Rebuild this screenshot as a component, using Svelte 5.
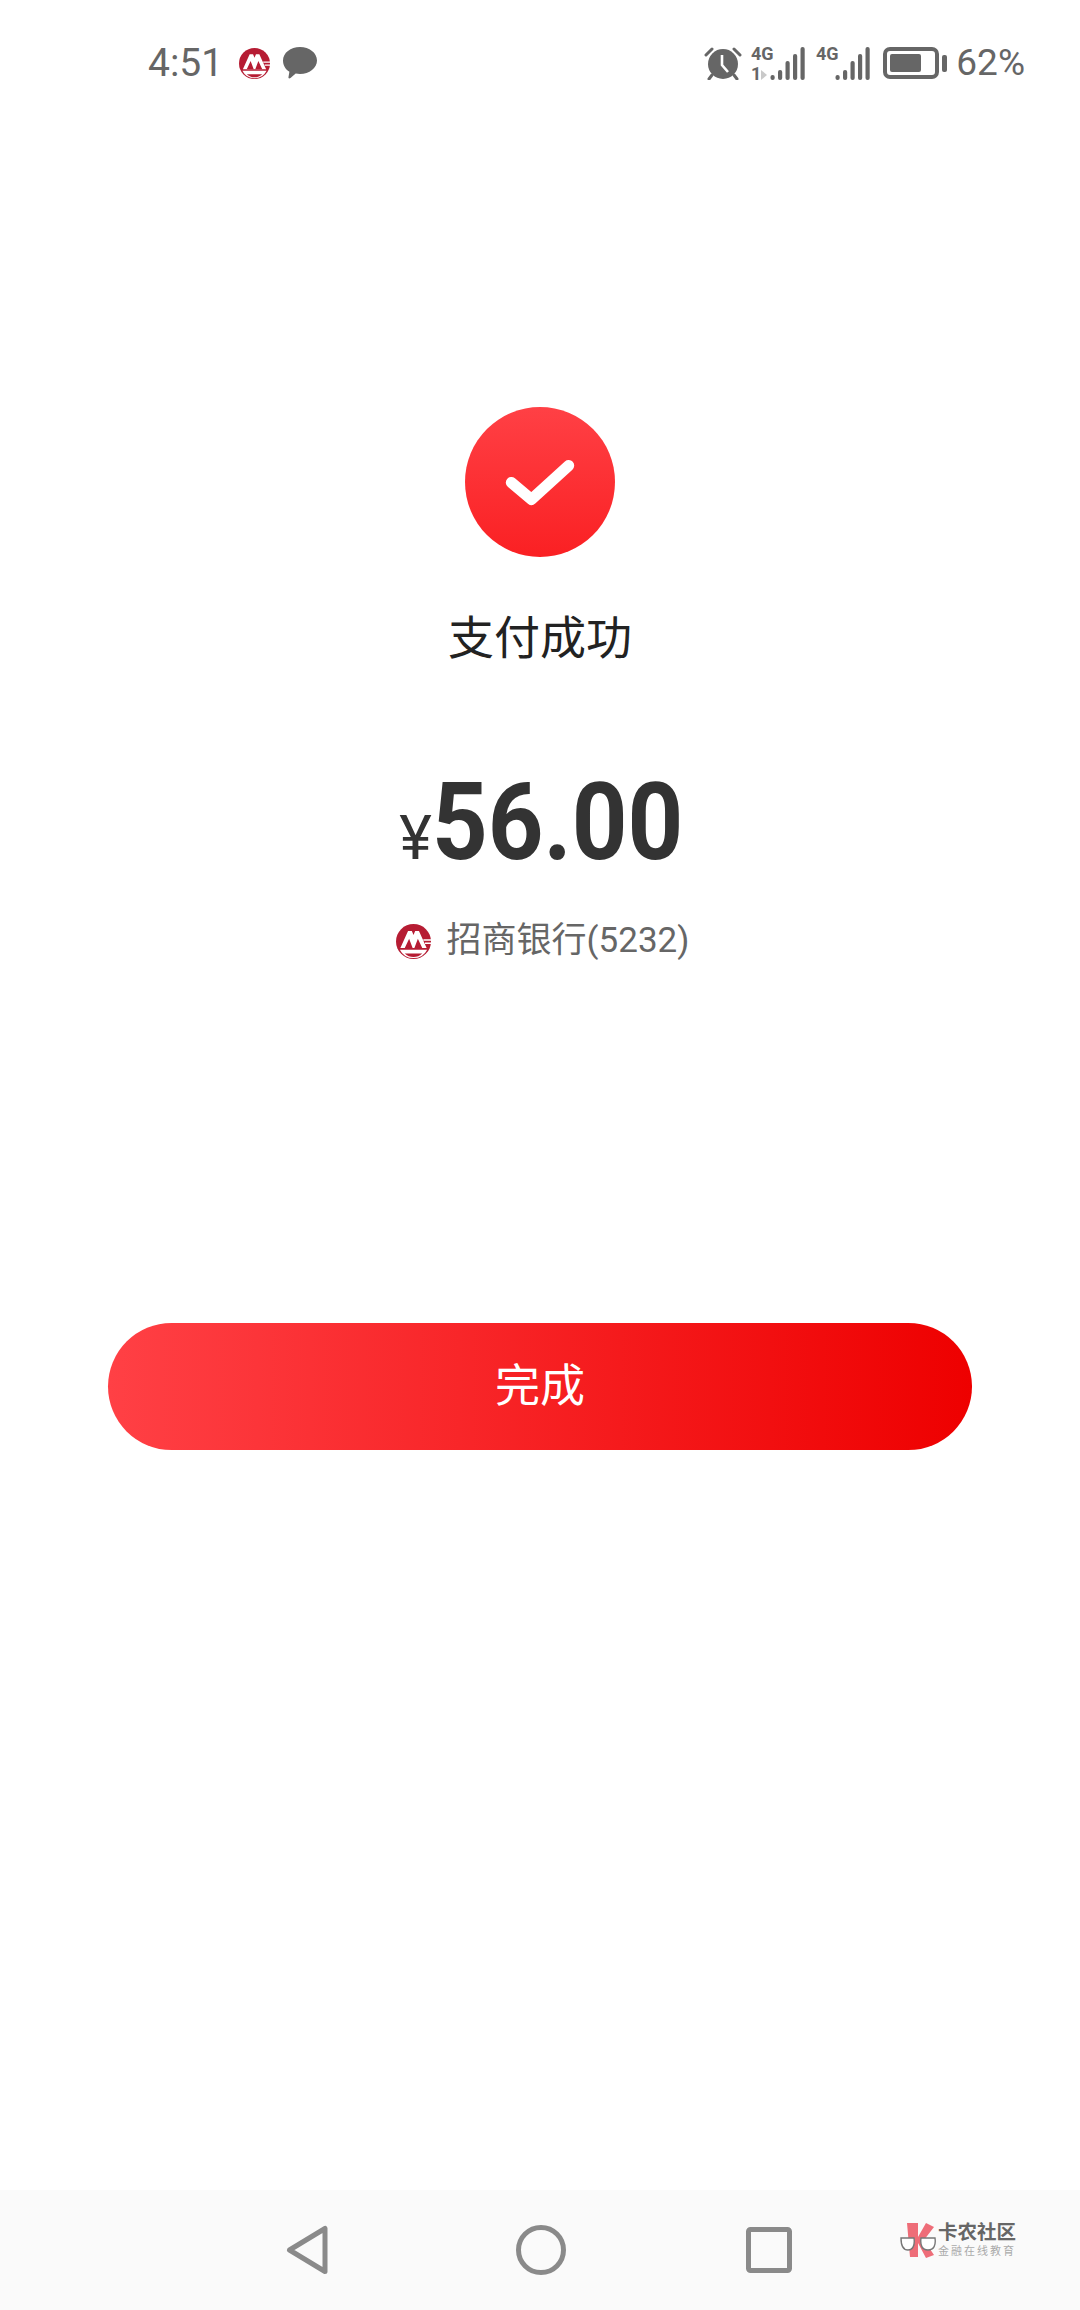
<script>
  const title = '支付成功';
  const amount = '56.00';
  const bank = '招商银行(5232)';
  const signalBars = [
    { x: 0, y: 28, h: 5 },
    { x: 7.5, y: 23, h: 10 },
    { x: 15, y: 14, h: 19 },
    { x: 22.5, y: 7, h: 26 },
    { x: 30, y: 0, h: 33 }
  ];
</script>

{#snippet cmbLogo(size)}
  <svg class="cmb" width={size} height={size} viewBox="0 0 32 32">
    <circle cx="16" cy="16" r="16" fill="#b61c33" />
    <path d="M4 22 11 6.500h3.500L16 10l1.500-3.500H21L28 22z" fill="#fff" />
    <path d="M8 22l4-8.500 3.200 8.500zM16.800 22 20 13.500l4 8.500z" fill="#b61c33" />
    <path d="M3.500 23.500h25a14 14 0 0 1-25 0z" fill="#fff" />
    <path d="M8 27h16a11.500 11.500 0 0 1-16 0z" fill="#b61c33" />
    <path d="M25 14h7v1.200h-7zM26.500 17h5.500v1.200h-5.500z" fill="#fff" />
  </svg>
{/snippet}

{#snippet signal(hasSim)}
  <svg class="signal" width="56" height="45" viewBox="0 -6 56 45">
    <text class="net" x="0" y="13">4G</text>
    {#if hasSim}
      <text class="net" x="0" y="33">1</text>
      <path d="M10 23v10l6-5z" fill="#c9c9c9" />
    {/if}
    {#each signalBars as bar}
      <rect x={19.5 + bar.x} y={bar.y} width="4.2" height={bar.h} rx="2" fill="#666" />
    {/each}
  </svg>
{/snippet}

<div class="page">
  <header class="status-bar">
    <div class="status-left">
      <span class="time">4:51</span>
      {@render cmbLogo(31)}
      <svg class="bubble" width="34" height="32" viewBox="0 0 34 32">
        <path d="M17 0c9.400 0 17 5.900 17 13.400S26.400 27 17 27c-1.500 0-3-.1-4.300-.4L7.500 31c-1.300.9-2.300.4-2-1l.9-5.300C2.500 22.300 0 18.100 0 13.400 0 5.900 7.600 0 17 0z" fill="#666" />
      </svg>
    </div>
    <div class="status-right">
      <svg class="alarm" width="38" height="34" viewBox="0 0 38 34">
        <circle cx="19" cy="18" r="15" fill="#666" />
        <path d="M18 9v10l6 7" fill="none" stroke="#fff" stroke-width="2.600" />
        <path d="M2 9l6-6M36 9l-6-6" stroke="#666" stroke-width="3" stroke-linecap="round" />
        <path d="M8 29l-3 4M30 29l3 4" stroke="#666" stroke-width="3" stroke-linecap="round" />
      </svg>
      {@render signal(true)}
      {@render signal(false)}
      <div class="battery">
        <div class="battery-body"><div class="battery-level"></div></div>
        <div class="battery-nub"></div>
      </div>
      <span class="percent">62%</span>
    </div>
  </header>

  <main class="result">
    <div class="check-badge">
      <svg width="70" height="51" viewBox="0 0 66 48">
        <path d="M6 24l19 16L60 8" fill="none" stroke="#fff" stroke-width="10.500" stroke-linecap="round" stroke-linejoin="round" />
      </svg>
    </div>
    <h1 class="title">{title}</h1>
    <div class="amount">
      <span class="yen">¥</span>
      <span class="digits">{amount}</span>
    </div>
    <div class="pay-method">
      {@render cmbLogo(35)}
      <span>{bank}</span>
    </div>
    <button class="done">完成</button>
  </main>

  <nav class="nav-bar">
    <svg width="44" height="50" viewBox="0 0 44 50">
      <path d="M39 3.500v43L3.500 25z" fill="none" stroke="#8a8a8a" stroke-width="5" stroke-linejoin="round" />
    </svg>
    <svg width="50" height="50" viewBox="0 0 50 50">
      <circle cx="25" cy="25" r="22.500" fill="none" stroke="#8a8a8a" stroke-width="5" />
    </svg>
    <svg class="square" width="46" height="46" viewBox="0 0 46 46">
      <rect x="2.500" y="2.500" width="41" height="41" rx="2" fill="none" stroke="#8a8a8a" stroke-width="5" />
    </svg>
    <div class="watermark">
      <svg width="36" height="36" viewBox="0 0 36 36">
        <path d="M7 1h11v34h-8zM18 15 26 1l8 4-10 13 10 15-8 3-8-15z" fill="#ee6d78" />
        <path d="M1 16h13c1 7-1 12-6 12S1 23 1 16zM21 16h14c1 7-1 12-7 12s-8-5-7-12z" fill="#fff" stroke="#777" stroke-width="1.400" />
      </svg>
      <div class="watermark-text">
        <span class="wm-name">卡农社区</span>
        <span class="wm-sub">金融在线教育</span>
      </div>
    </div>
  </nav>
</div>

<style>
  :global(body) {
    margin: 0;
    background: #fff;
  }

  .page {
    display: flex;
    flex-direction: column;
    width: 1080px;
    height: 2310px;
    font-family: Roboto, "Noto Sans CJK SC", sans-serif;
    overflow: hidden;
  }

  /* status bar */
  .status-bar {
    display: flex;
    align-items: center;
    justify-content: space-between;
    height: 122px;
    padding: 2px 55px 0 148px;
    color: #666;
    flex-shrink: 0;
  }

  .status-left {
    display: flex;
    align-items: center;
    gap: 13px;
  }

  .time {
    font-size: 39px;
    line-height: 44px;
    margin-right: 3px;
  }

  .status-right {
    display: flex;
    align-items: center;
    gap: 9px;
  }

  .net {
    font: 700 18px Roboto, sans-serif;
    fill: #666;
  }

  .battery {
    display: flex;
    align-items: center;
    gap: 3px;
    margin-left: 2px;
  }

  .battery-body {
    box-sizing: border-box;
    width: 56px;
    height: 32px;
    border: 4px solid #666;
    border-radius: 7px;
    padding: 3px;
  }

  .battery-level {
    width: 31px;
    height: 100%;
    border-radius: 2px;
    background: #666;
  }

  .battery-nub {
    width: 5px;
    height: 17px;
    border-radius: 2px;
    background: #666;
  }

  .percent {
    font-size: 37px;
    line-height: 44px;
  }

  /* payment result */
  .result {
    display: flex;
    flex-direction: column;
    align-items: center;
    padding-top: 283px;
  }

  .check-badge {
    display: flex;
    align-items: center;
    justify-content: center;
    width: 150px;
    height: 150px;
    border-radius: 50%;
    background: linear-gradient(180deg, #ff4045, #fa2023);
  }

  .title {
    margin: 51px 0 0;
    font-size: 46px;
    font-weight: 400;
    line-height: 60px;
    color: #222;
  }

  .amount {
    display: flex;
    align-items: baseline;
    height: 140px;
    margin-top: 84px;
    color: #333;
  }

  .yen {
    font-size: 62px;
    font-weight: 400;
    line-height: 140px;
  }

  .digits {
    width: 249px;
    font-size: 108px;
    font-weight: 700;
    line-height: 140px;
    white-space: nowrap;
    transform: scaleX(0.9);
    transform-origin: left;
  }

  .pay-method {
    display: flex;
    align-items: center;
    gap: 16px;
    margin-top: 26px;
    padding-left: 5px;
    font-size: 35px;
    line-height: 46px;
    color: #666;
  }

  .done {
    width: 864px;
    height: 127px;
    margin-top: 359px;
    padding-bottom: 9px;
    border: none;
    border-radius: 64px;
    background: linear-gradient(90deg, #ff4045, #ee0000);
    color: #fff;
    font-family: inherit;
    font-size: 45px;
  }

  /* navigation bar */
  .nav-bar {
    position: relative;
    display: flex;
    align-items: center;
    justify-content: center;
    gap: 186px;
    height: 120px;
    margin-top: auto;
    padding-right: 2px;
    background: #fafafa;
    flex-shrink: 0;
  }

  .square {
    margin-left: -6px;
  }

  .watermark {
    position: absolute;
    left: 900px;
    top: 32px;
    display: flex;
    align-items: center;
    gap: 2px;
  }

  .watermark-text {
    display: flex;
    flex-direction: column;
    line-height: 1;
  }

  .wm-name {
    font-size: 19.500px;
    font-weight: 700;
    color: #666;
  }

  .wm-sub {
    margin-top: 3px;
    font-size: 11px;
    letter-spacing: 2px;
    color: #aaa;
  }
</style>
